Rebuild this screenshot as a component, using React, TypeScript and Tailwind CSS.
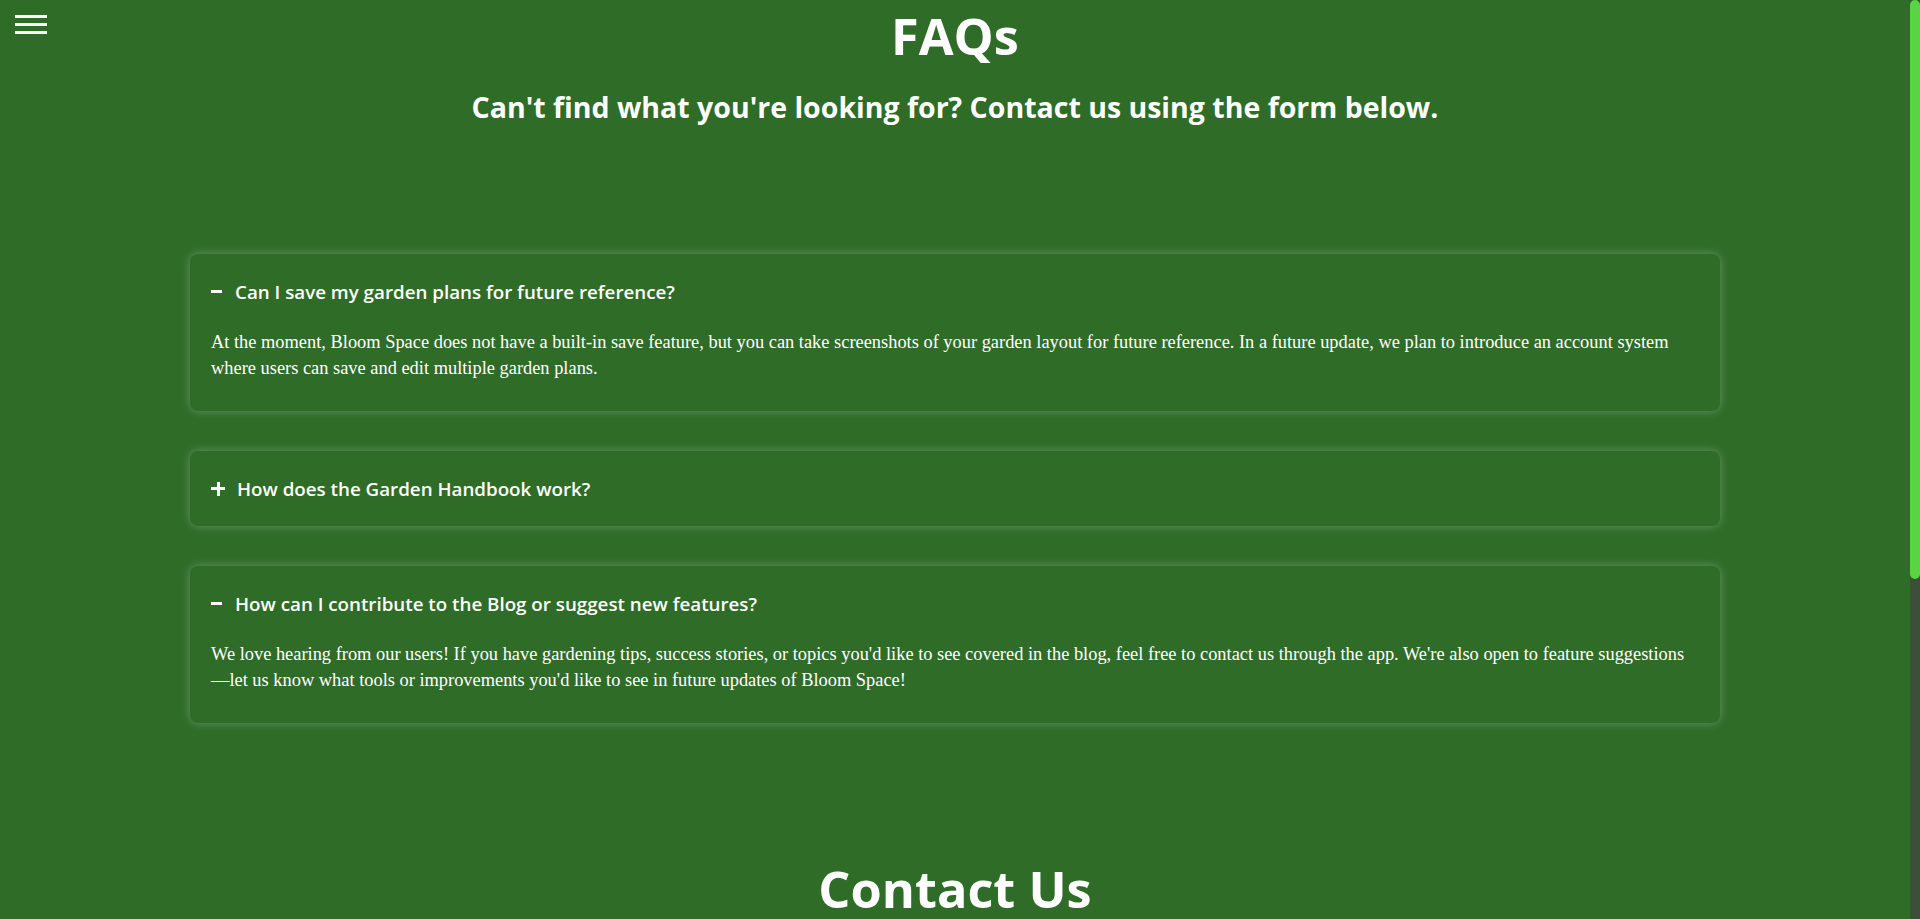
import React from "react";

const faqs = [
  {
    q: "Can I save my garden plans for future reference?",
    a: "At the moment, Bloom Space does not have a built-in save feature, but you can take screenshots of your garden layout for future reference. In a future update, we plan to introduce an account system where users can save and edit multiple garden plans.",
    open: true,
  },
  {
    q: "How does the Garden Handbook work?",
    a: "",
    open: false,
  },
  {
    q: "How can I contribute to the Blog or suggest new features?",
    a: "We love hearing from our users! If you have gardening tips, success stories, or topics you'd like to see covered in the blog, feel free to contact us through the app. We're also open to feature suggestions\u2014let us know what tools or improvements you'd like to see in future updates of Bloom Space!",
    open: true,
  },
];

const head = { fontFamily: '"Open Sans", "Noto Sans", sans-serif' };
const serif = { fontFamily: '"Liberation Serif", "Times New Roman", serif' };

function Icon({ open }: { open: boolean }) {
  if (open) {
    return (
      <span className="mr-[13px] flex h-[14px] w-[11px] items-center">
        <span className="block h-[3px] w-[11px] bg-white" />
      </span>
    );
  }
  return (
    <span className="relative mr-[12px] block h-[14px] w-[14px]">
      <span className="absolute left-0 top-[5.5px] block h-[3px] w-[14px] bg-white" />
      <span className="absolute left-[5.5px] top-0 block h-[14px] w-[3px] bg-white" />
    </span>
  );
}

export default function App() {
  return (
    <div className="flex h-[919px] w-full overflow-hidden bg-[#2f6c28] text-white">
      <div className="relative flex-1">
        <button className="absolute left-[15px] top-[15px] flex flex-col gap-[5px]" aria-label="menu">
          <span className="block h-[3px] w-[32px] bg-white" />
          <span className="block h-[3px] w-[32px] bg-white" />
          <span className="block h-[3px] w-[32px] bg-white" />
        </button>
        <h1 style={head} className="text-center text-[50.5px] font-bold leading-[72px]">
          FAQs
        </h1>
        <h2 style={head} className="mt-[16px] text-center text-[28.5px] font-bold leading-[39px]">
          Can't find what you're looking for? Contact us using the form below.
        </h2>
        <div className="mx-[190px] mt-[127px] flex flex-col gap-[40px]">
          {faqs.map((f) => (
            <div
              key={f.q}
              className="rounded-[8px] bg-[#2f6c28] px-[21px] pt-[24px] pb-[24px] shadow-[0_0_10px_rgba(255,255,255,0.28)]"
            >
              <div style={head} className="flex items-center text-[18.75px] font-semibold leading-[27px]">
                <Icon open={f.open} />
                <span>{f.q}</span>
              </div>
              {f.open && (
                <p style={serif} className="mt-[24px] pr-[2px] pb-[6px] text-[18.4px] leading-[26px]">
                  {f.a}
                </p>
              )}
            </div>
          ))}
        </div>
        <h2 style={head} className="mt-[130px] text-center text-[50.5px] font-bold leading-[72px]">
          Contact Us
        </h2>
      </div>
      <div className="flex w-[10px] flex-col bg-[#3b4f39]">
        <div className="h-[579px] w-[10px] rounded-full bg-[#59d443]" />
      </div>
    </div>
  );
}
